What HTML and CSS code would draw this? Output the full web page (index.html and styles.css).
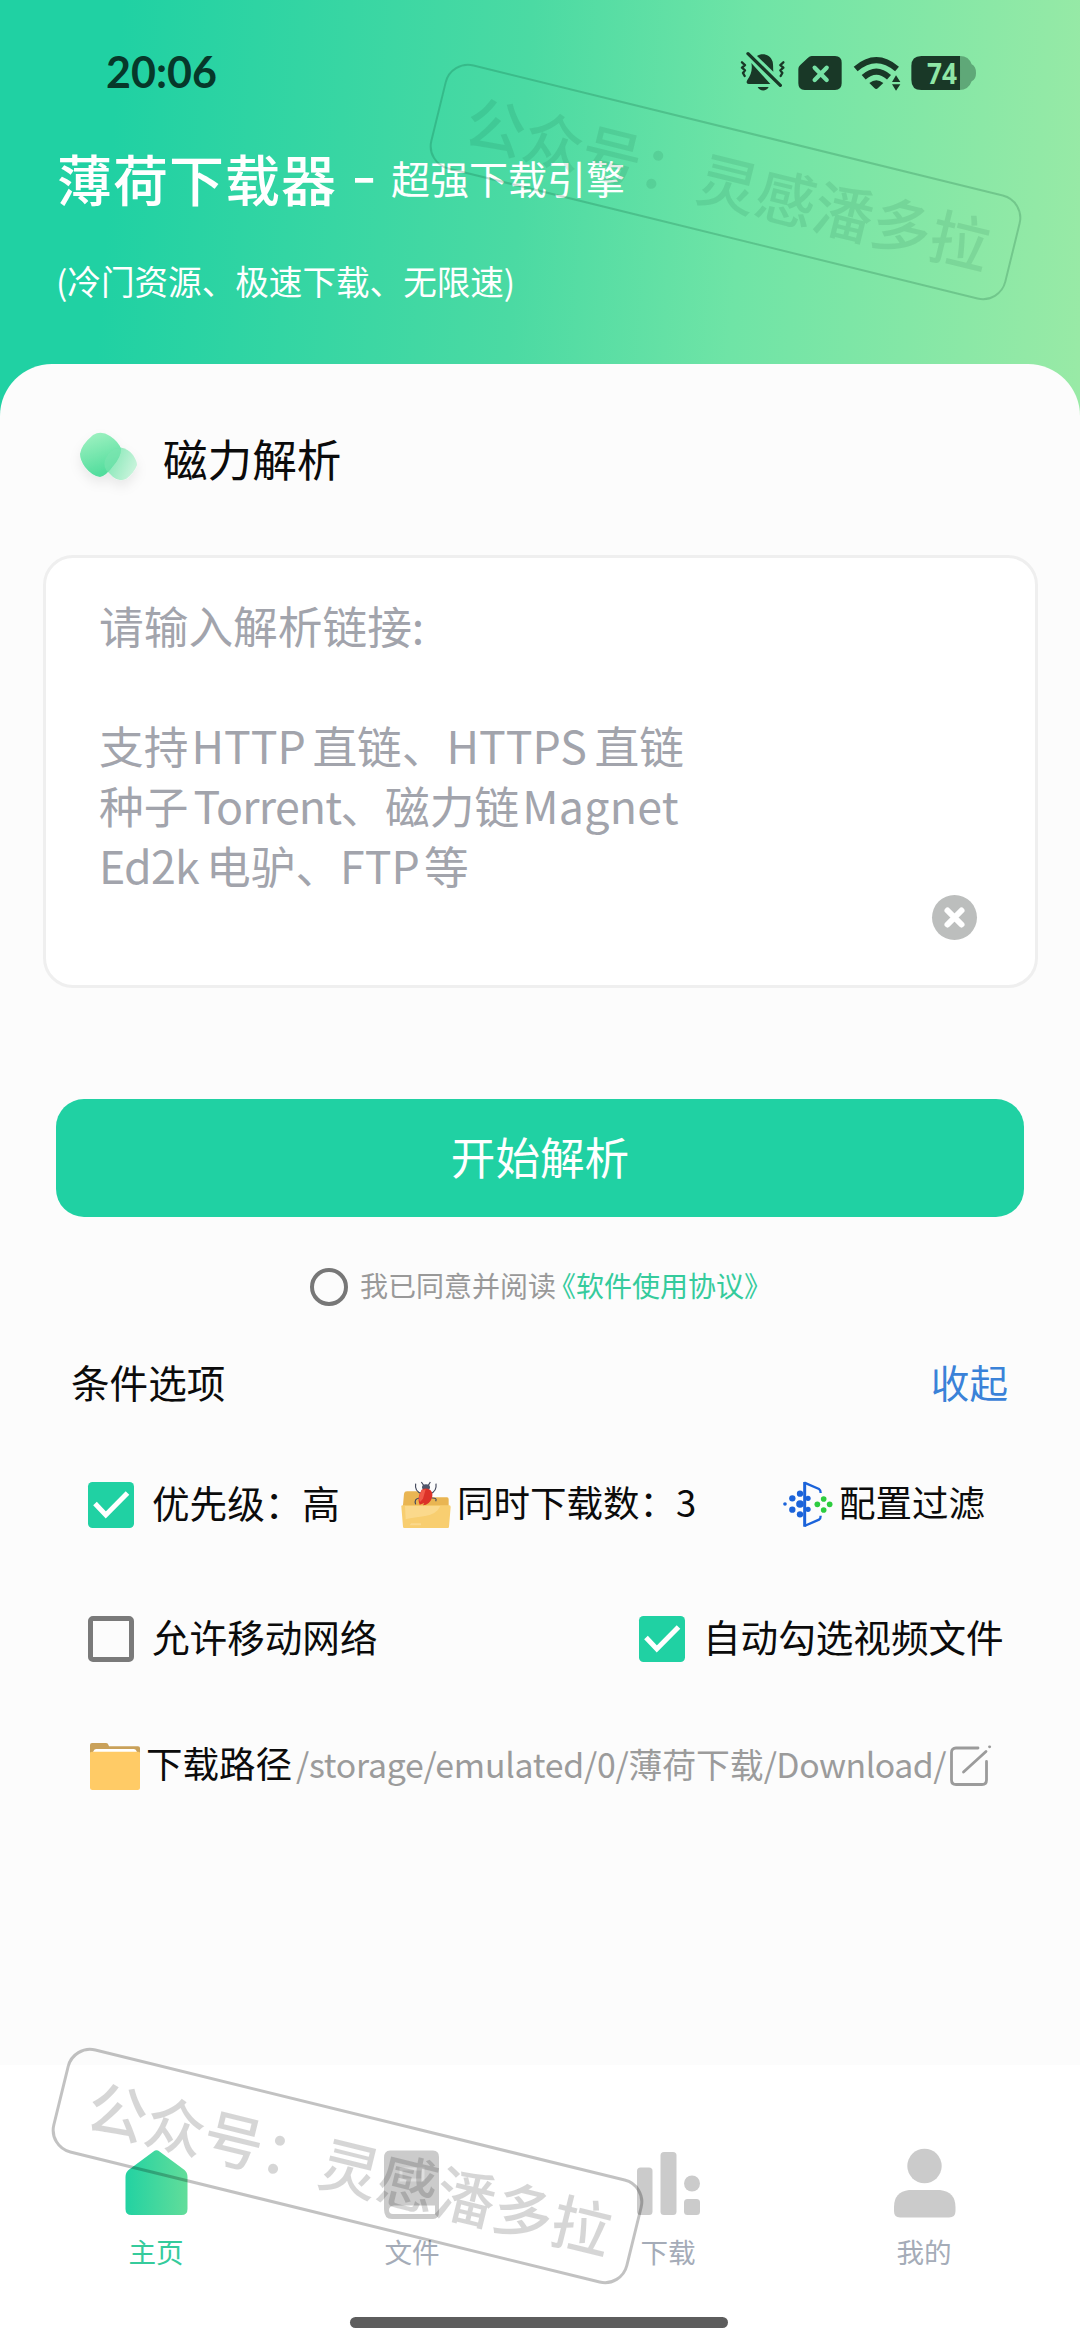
FILE: index.html
```
<!DOCTYPE html>
<html lang="zh-CN">
<head>
<meta charset="utf-8">
<title>薄荷下载器</title>
<link rel="stylesheet" href="styles.css">
</head>
<body>
<div class="screen">
  <header class="header">
    <div class="status">
      <span class="clock">20:06</span>
      <svg class="status-icons" viewBox="60 30 710 125" role="img" aria-label="状态">
        <g fill="none" stroke="#193827" stroke-linecap="round" stroke-linejoin="round">
          <path stroke-width="7" d="M66 64l9 8-9 8 9 8-6 8 5 9M190 64l-9 8 9 8-9 8 6 8-5 9"/>
        </g>
        <path fill="#193827" d="M111 45C124 35 150 37 158 62C160 72 159 80 160 92ZM94 66C98 86 93 101 82 117Q76 128 86 129H151ZM113 138H146C140 152 119 152 113 138Z"/>
        <path stroke="#193827" stroke-width="10" stroke-linecap="round" d="M84 38L181 133"/>
        <path fill="#193827" d="M275 45H345Q365 45 365 65V127Q365 147 345 147H254Q235 147 235 127V84Q235 78 240 73L264 50Q269 45 275 45Z"/>
        <path stroke="#76e2a5" stroke-width="13" stroke-linecap="round" d="M284 80L320 117M320 80L284 117"/>
        <path fill="none" stroke="#193827" stroke-width="18" d="M407 84Q469 31 531 84M431 109Q469 75 507 109"/>
        <path fill="#193827" d="M448 126Q469 110 490 126L474 141Q469 147 463 141ZM528 103L541 123H516ZM516 130H541L528 149Z"/>
        <path fill="#5fa878" d="M718 45Q746 44 755 70Q768 76 768 96Q768 115 755 121Q746 147 718 147Z"/>
        <path fill="#193827" d="M604 45H720V147H604Q574 147 574 117V75Q574 45 604 45Z"/>
        <text class="battery" x="621" y="128" textLength="90" lengthAdjust="spacingAndGlyphs">74</text>
      </svg>
    </div>
    <div class="brand"><h1>薄荷下载器</h1><span class="dash">-</span><span class="tagline">超强下载引擎</span></div>
    <p class="subtitle">(冷门资源、极速下载、无限速)</p>
  </header>

  <main class="sheet">
    <div class="section-title">
      <svg class="leaf" viewBox="0 0 70 64">
        <defs>
          <linearGradient id="leafA" x1="0" y1="0" x2="0.3" y2="1"><stop offset="0" stop-color="#a5f3c4"/><stop offset="1" stop-color="#52dd9d"/></linearGradient>
          <linearGradient id="leafB" x1="0" y1="0" x2="1" y2="0.4"><stop offset="0" stop-color="#6fe3aa"/><stop offset="1" stop-color="#c4f3d9"/></linearGradient>
          <filter id="leafShadow" x="-40%" y="-40%" width="190%" height="210%"><feDropShadow dx="0" dy="6" stdDeviation="6" flood-color="#000" flood-opacity=".08"/></filter>
        </defs>
        <g filter="url(#leafShadow)">
          <path fill="url(#leafB)" d="M47 17Q57 19 61 25Q65 31 65 35Q62 43 54 49Q47 52 41 47L30 36Z"/>
          <path fill="url(#leafA)" d="M21 5Q29 0 38 6Q47 12 49 19Q49 27 41 36Q34 46 28 47Q20 46 13 37Q8 30 8 24Q9 15 21 5Z"/>
          <path fill="#7ce5b0" opacity=".6" d="M49 18Q38 18 33 30Q31 38 36 42L41 36Q49 27 49 18Z"/>
        </g>
      </svg>
      <h2>磁力解析</h2>
    </div>

    <div class="input-card">
      <div class="placeholder">
        <div>请输入解析链接:</div>
        <div>&nbsp;</div>
        <div>支持<span class="lat http">HTTP</span>直链、<span class="lat https">HTTPS</span>直链</div>
        <div>种子<span class="lat torrent">Torrent</span>、磁力链<span class="lat magnet">Magnet</span></div>
        <div><span class="lat ed2k">Ed2k</span>电驴、<span class="lat ftp">FTP</span>等</div>
      </div>
      <svg class="clear" viewBox="0 0 45 45"><circle cx="22.5" cy="22.5" r="22.5" fill="#bcbebd"/><path stroke="#fff" stroke-width="6" stroke-linecap="round" d="M15.500 15.500l14 14M29.500 15.500l-14 14"/></svg>
    </div>

    <button class="primary">开始解析</button>

    <div class="agree"><span class="radio"></span><span>我已同意并阅读</span><a class="terms">《软件使用协议》</a></div>

    <div class="options-head"><h3>条件选项</h3><a class="collapse">收起</a></div>

    <div class="row row-a">
      <div class="item">
        <svg class="check" viewBox="0 0 46 46"><rect width="46" height="46" rx="4.5" fill="#20d1a3"/><path fill="none" stroke="#fff" stroke-width="5" d="M7 21.500L17.800 33L39.500 11"/></svg>
        <span class="label">优先级：高</span>
      </div>
      <div class="item tight">
        <svg class="bug" viewBox="0 0 150 138">
          <path fill="#e9b552" d="M9 35Q10 28 18 28H50Q56 28 60 38L64 46H138Q143 46 143 52V80H5Z"/>
          <path fill="#f8ce70" d="M1 74Q0 70 5 70H145Q149 70 149 75L144 134Q144 138 140 138H10Q6 138 6 134Z"/>
          <path fill="#fbdc94" opacity=".8" d="M12 72H118Q108 96 72 102Q30 108 14 112ZM30 124H60V130H26Z"/>
          <g fill="none" stroke="#454a5e" stroke-width="3.5"><path d="M44 5Q40 28 62 35M105 5Q108 28 88 35M61 0L70 13M88 0L80 13M56 48Q38 50 44 67M92 48Q110 47 104 58"/></g>
          <ellipse cx="75" cy="16" rx="12" ry="9" fill="#50556b"/>
          <path fill="#dc3228" d="M62 23Q75 16 88 24Q98 34 92 50Q85 68 66 70L70 63L56 68Q50 54 55 38Z"/>
          <path fill="#f15b48" d="M62 25L74 22L66 50L57 60Q51 46 58 34Z"/>
        </svg>
        <span class="label sm">同时下载数：3</span>
      </div>
      <div class="item tight">
        <svg class="filter" viewBox="0 0 150 140">
          <path fill="none" stroke="#1b63da" stroke-width="9" d="M65 3V137"/>
          <path fill="none" stroke="#1b63da" stroke-width="7" d="M64 5L108 24Q113 27 113 36M64 135L108 116Q113 113 113 104"/>
          <g fill="#1b63da"><circle cx="6" cy="69" r="5.5"/><circle cx="28" cy="52" r="9.5"/><circle cx="28" cy="86" r="9.5"/><circle cx="51" cy="38" r="9.5"/><circle cx="51" cy="69" r="11.5"/><circle cx="51" cy="100" r="9.5"/><circle cx="75" cy="52" r="8"/><circle cx="75" cy="85" r="8"/></g>
          <g fill="#2dcc3f"><circle cx="103" cy="70" r="8.5"/><circle cx="122" cy="54" r="8.5"/><circle cx="122" cy="87" r="8.5"/><circle cx="140" cy="70" r="8.5"/></g>
        </svg>
        <span class="label sm">配置过滤</span>
      </div>
    </div>

    <div class="row row-b">
      <div class="item">
        <svg class="check" viewBox="0 0 46 46"><rect x="2.5" y="2.5" width="41" height="41" rx="2.5" fill="none" stroke="#7a7a7a" stroke-width="5"/></svg>
        <span class="label">允许移动网络</span>
      </div>
      <div class="item">
        <svg class="check" viewBox="0 0 46 46"><rect width="46" height="46" rx="4.5" fill="#20d1a3"/><path fill="none" stroke="#fff" stroke-width="5" d="M7 21.500L17.800 33L39.500 11"/></svg>
        <span class="label">自动勾选视频文件</span>
      </div>
    </div>

    <div class="row row-c">
      <svg class="folder" viewBox="0 0 50 47"><path fill="#c9a15a" d="M0 2Q0 0 2 0H16Q18 0 18.500 2L19 3.200H48Q50 3.200 50 5V14H0Z"/><path fill="#fff" d="M3 9Q4 6 6 6H44Q46 6 47 9L48 14H2Z"/><path fill="#ffcb66" d="M0 10Q0 8.800 2 8.800H48Q50 8.800 50 10V44.500Q50 47 47.500 47H2.500Q0 47 0 44.500Z"/></svg>
      <span class="label sm">下载路径</span>
      <span class="path"><span class="path-a">/storage/emulated/0/</span>薄荷下载<span class="path-b">/Download/</span></span>
      <svg class="edit" viewBox="0 0 42 42"><g fill="none" stroke="#9b9b9b" stroke-width="2.800" stroke-linecap="round" stroke-linejoin="round"><path d="M28 3H6Q1.500 3 1.500 7.500V35Q1.500 39.500 6 39.500H32Q36.500 39.500 36.500 35V16.500"/><path d="M13.500 27L36 6.500"/><path d="M39.500 1.800h.2"/></g></svg>
    </div>
  </main>

  <nav class="tabs">
    <div class="tab active">
      <svg viewBox="0 0 70 72"><defs><linearGradient id="home" x1="0" x2="1"><stop offset="0" stop-color="#22d2a2"/><stop offset="1" stop-color="#62dd9a"/></linearGradient></defs><path fill="url(#home)" d="M32.500 2.500Q35.500 0 38.500 2.500L63.500 21Q66.500 23.500 66.500 28V60Q66.500 66 60.500 66H10.500Q4.500 66 4.500 60V28Q4.500 23.500 7.500 21Z"/></svg>
      <span>主页</span>
    </div>
    <div class="tab">
      <svg viewBox="0 0 70 72"><path fill="#cbcbcb" fill-rule="evenodd" d="M13 1.500H56Q62 1.500 62 8V63Q62 70 56 70H15Q7 70 7 60V9Q7 1.500 13 1.500ZM17 56.500Q12 57 12 61Q12 65 16 65H58V56.500Z"/><path fill="none" stroke="#dedede" stroke-width="3" d="M24 20H46V31H24Z"/></svg>
      <span>文件</span>
    </div>
    <div class="tab">
      <svg viewBox="0 0 70 72"><g fill="#cbcbcb"><rect x="4" y="18.500" width="15.500" height="47.500" rx="3.500"/><rect x="27.500" y="3" width="16" height="63" rx="3.500"/><circle cx="59" cy="34.500" r="8"/><rect x="51" y="50" width="16" height="16" rx="3.500"/></g></svg>
      <span>下载</span>
    </div>
    <div class="tab">
      <svg viewBox="0 0 70 72"><g fill="#cbcbcb"><circle cx="35.500" cy="17" r="17.200"/><path d="M20 41H51Q66.500 43 66.500 58V62Q66.500 68.500 60 68.500H11Q5 68.500 5 62V58Q5 43 20 41Z"/></g></svg>
      <span>我的</span>
    </div>
  </nav>
  <div class="gesture"></div>

  <div class="mark mark-top">公众号：灵感潘多拉</div>
  <div class="mark mark-bottom">公众号：灵感潘多拉</div>
</div>
</body>
</html>
```
FILE: styles.css
```
* { box-sizing: border-box; }
body {
  margin: 0;
  background: #fff;
  font-family: "Noto Sans CJK SC", sans-serif;
  color: #0b0b0b;
}
h1, h2, h3, p { margin: 0; font-weight: 400; }
svg { display: block; flex: none; overflow: visible; }
.screen {
  position: relative;
  width: 1080px;
  height: 2345px;
  display: flex;
  flex-direction: column;
  overflow: hidden;
  white-space: nowrap;
}

/* header */
.header {
  flex: none;
  height: 420px;
  background: linear-gradient(94deg, #20d1a3 11%, #4bdaa3 48%, #6fe4a6 68%, #99eaa6 100%);
  color: #fff;
}
.status {
  height: 144px;
  padding: 0 103px 0 106px;
  display: flex;
  align-items: center;
  justify-content: space-between;
}
.clock { font: 700 43px/44px Lato, sans-serif; color: #06382a; }
.status-icons { width: 236.7px; height: 41.7px; }
.battery { font: 700 86px "Noto Sans", sans-serif; fill: #8fe6a6; }
.brand {
  height: 66px;
  padding-left: 57px;
  display: flex;
  align-items: center;
}
.brand h1 { font-size: 55px; font-weight: 500; letter-spacing: 1px; line-height: 66px; }
.dash { width: 54px; padding-bottom: 10px; text-align: center; font-size: 55px; font-weight: 500; line-height: 56px; transform: scaleX(1.25); }
.tagline { font-size: 39px; line-height: 66px; }
.subtitle { padding-left: 56px; font-size: 33.6px; line-height: 141px; }

/* content sheet */
.sheet {
  flex: 1;
  margin-top: -56px;
  background: #fcfcfc;
  border-radius: 52px 52px 0 0;
}
.section-title {
  height: 191px;
  padding: 0 0 4px 72px;
  display: flex;
  align-items: center;
  gap: 21px;
}
.leaf { width: 70px; height: 64px; margin-top: 8px; }
.section-title h2 { font-size: 44.6px; }
.input-card {
  height: 433px;
  margin: 0 42px 0 43px;
  padding: 37px 58px 0 53px;
  border: 3px solid #efefef;
  border-radius: 30px;
  background: #fff;
  display: flex;
  justify-content: space-between;
}
.placeholder { font-size: 44.7px; line-height: 60px; color: #a2a4ac; }
.lat { display: inline-block; }
.http { width: 124px; padding-left: 3px; }
.https { width: 148px; }
.torrent { width: 152px; padding-left: 5px; letter-spacing: -.8px; }
.magnet { width: 166px; padding-left: 3px; letter-spacing: .3px; }
.ed2k { width: 107px; letter-spacing: -.8px; }
.ftp { width: 84px; }
.clear { width: 45px; height: 45px; margin-top: 300px; }
.primary {
  display: block;
  width: 968px;
  height: 118px;
  margin: 111px 56px 0;
  padding: 0 0 6px;
  border: 0;
  border-radius: 28px;
  background: #20d1a3;
  color: #fff;
  font: 400 44.6px "Noto Sans CJK SC", sans-serif;
}
.agree {
  height: 139px;
  padding-left: 310px;
  display: flex;
  align-items: center;
  font-size: 28px;
  color: #999;
}
.agree span, .agree a { padding-bottom: 3px; }
.agree .radio {
  width: 38px;
  height: 38px;
  margin-right: 12px;
  border: 4px solid #777;
  border-radius: 50%;
}
.terms { margin-left: -8px; color: #35cb9c; }
.options-head {
  height: 56px;
  padding: 0 72px 7px 71px;
  display: flex;
  align-items: center;
  justify-content: space-between;
}
.options-head h3, .collapse { font-size: 38.6px; }
.collapse { color: #3a82d8; }
.row { display: grid; align-items: center; padding-left: 88px; }
.row-a { height: 185px; grid-template-columns: 313px 382px auto; }
.row-b { height: 84px; grid-template-columns: 551px auto; }
.row-c { height: 170px; padding-left: 90px; display: flex; }
.item { display: flex; align-items: center; gap: 18px; }
.tight { gap: 6px; }
.check { width: 46px; height: 46px; }
.bug { width: 50px; height: 46px; }
.filter { width: 50px; height: 46.7px; }
.label { font-size: 37.6px; line-height: 50px; padding-bottom: 6px; }
.sm { font-size: 36.5px; }
.folder { width: 50px; height: 47px; margin-right: 6px; }
.path { width: 658px; padding: 0 0 6px 4px; font-size: 33.8px; color: #9b9b9b; }
.path-a, .path-b { display: inline-block; }
.path-a { letter-spacing: -.25px; }
.path-b { letter-spacing: -.5px; }
.edit { width: 42px; height: 42px; }

/* bottom navigation */
.tabs {
  height: 280px;
  padding: 84px 28px 0;
  display: grid;
  grid-template-columns: repeat(4, 256px);
  background: #fff;
}
.tab { display: flex; flex-direction: column; align-items: center; font-size: 27.6px; color: #a5acb8; }
.tab svg { width: 70px; height: 72px; }
.tab span { line-height: 40px; margin-top: 10px; }
.active { color: #35cb9c; }
.gesture {
  position: absolute;
  left: 350px;
  bottom: 17px;
  width: 378px;
  height: 11px;
  border-radius: 6px;
  background: #5d5d5d;
}

/* tilted stamps over the page */
.mark {
  position: absolute;
  width: 593px;
  height: 108px;
  padding-left: 6px;
  border: 2px solid;
  border-radius: 24px;
  font-size: 59.7px;
  font-weight: 500;
  line-height: 100px;
  text-align: center;
  transform: rotate(13.8deg);
  pointer-events: none;
}
.mark-top { left: 429px; top: 128px; color: rgba(0, 70, 40, .1); border-color: rgba(0, 70, 40, .2); }
.mark-bottom { left: 51px; top: 2112px; color: rgba(0, 0, 0, .16); border-width: 3px; border-color: rgba(0, 0, 0, .24); }
```
